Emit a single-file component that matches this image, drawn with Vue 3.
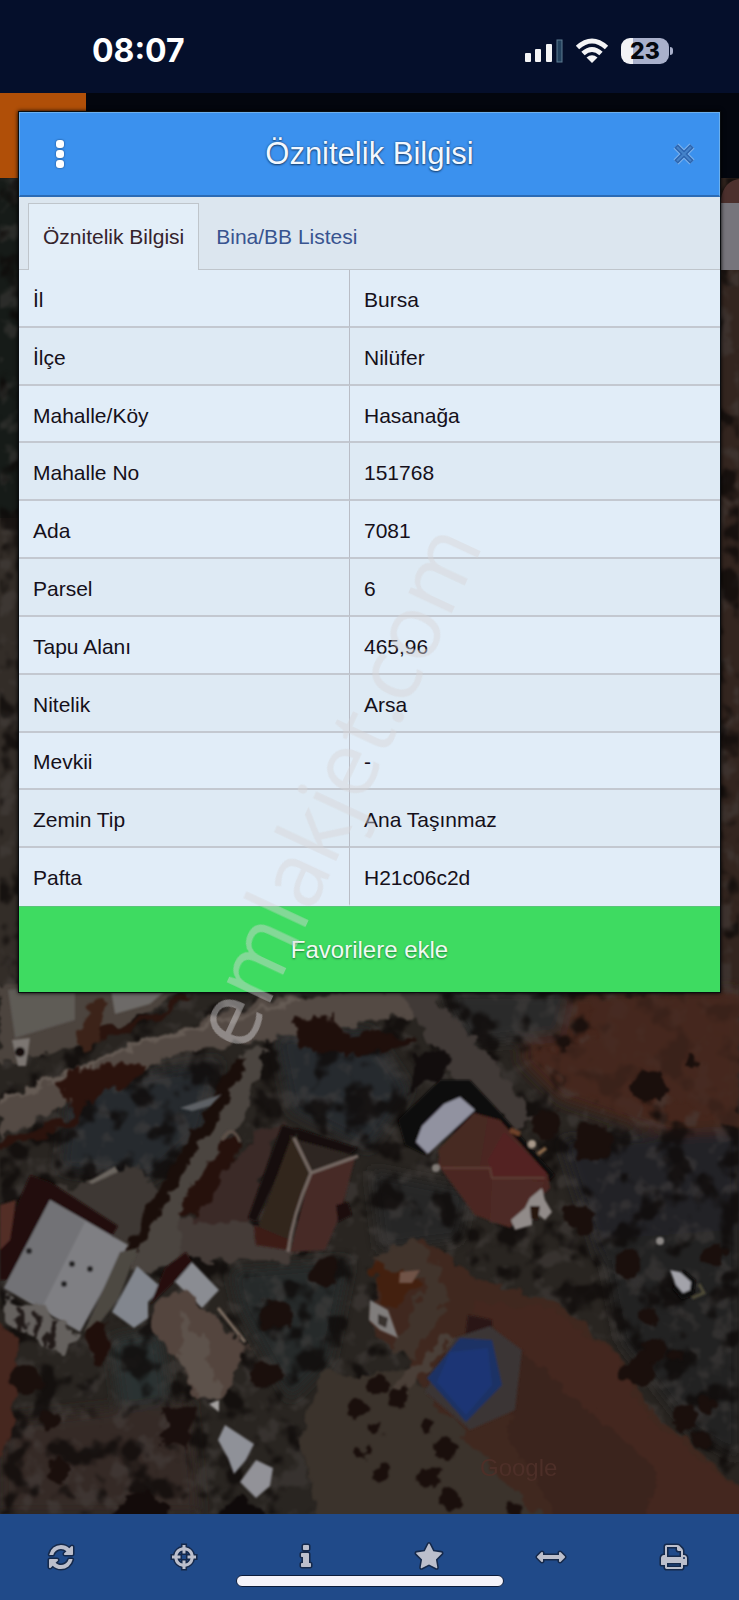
<template>
  <div class="screen">
    <header class="status-bar">
      <span class="clock">08:07</span>
      <div class="status-icons">
        <svg class="signal" viewBox="0 0 38 24" aria-hidden="true">
          <rect x="0" y="14" width="6" height="9" rx="1" fill="#f4f4f6" />
          <rect x="10" y="10" width="6" height="13" rx="1" fill="#f4f4f6" />
          <rect x="21" y="5" width="6" height="18" rx="1" fill="#f4f4f6" />
          <rect x="32" y="1" width="5" height="22" fill="#22405c" stroke="#5f7c92" stroke-width="1" />
        </svg>
        <svg class="wifi" viewBox="0 0 34 26" aria-hidden="true">
          <path d="M2.5 9.5Q17-3.500 31.500 9.500" fill="none" stroke="#f4f4f6" stroke-width="5" />
          <path d="M8 15.500Q17 7.500 26 15.500" fill="none" stroke="#f4f4f6" stroke-width="5" />
          <path d="M11.500 19.500Q17 15 22.500 19.500L17 25z" fill="#f4f4f6" />
        </svg>
        <div class="battery">
          <span>23</span>
        </div>
      </div>
    </header>

    <div class="site-header">
      <div class="logo-block"></div>
    </div>

    <main class="map">
      <svg viewBox="0 178 739 1336" preserveAspectRatio="xMidYMax slice" aria-hidden="true">
        <defs>
          <filter id="trees" x="0" y="0" width="100%" height="100%" color-interpolation-filters="sRGB">
            <feTurbulence type="fractalNoise" baseFrequency="0.032" numOctaves="3" seed="8" />
            <feColorMatrix values="0 0 0 0 0.05  0 0 0 0 0.035  0 0 0 0 0.03  7 0 0 0 -3.7" />
            <feGaussianBlur stdDeviation="1" />
          </filter>
          <filter id="grain" x="0" y="0" width="100%" height="100%" color-interpolation-filters="sRGB">
            <feTurbulence type="fractalNoise" baseFrequency="0.045" numOctaves="3" seed="21" />
            <feColorMatrix values="0 0 0 0 0.3  0 0 0 0 0.28  0 0 0 0 0.27  0 6 0 0 -3.1" />
            <feGaussianBlur stdDeviation="1" />
          </filter>
          <filter id="rough" x="-5%" y="-5%" width="110%" height="110%" color-interpolation-filters="sRGB">
            <feTurbulence type="fractalNoise" baseFrequency="0.06" numOctaves="3" seed="4" result="n" />
            <feDisplacementMap in="SourceGraphic" in2="n" scale="20" xChannelSelector="R" yChannelSelector="G" />
            <feGaussianBlur stdDeviation="1" />
          </filter>
          <filter id="soft"><feGaussianBlur stdDeviation="1" /></filter>
          <filter id="haze"><feGaussianBlur stdDeviation="7" /></filter>
        </defs>

        <rect y="178" width="739" height="1336" fill="#292521" />

        <!-- edges beside the dialog -->
        <rect x="0" y="178" width="24" height="340" fill="#161b18" />
        <rect x="0" y="518" width="24" height="480" fill="#332d28" />
        <rect x="716" y="178" width="23" height="820" fill="#33251f" />

        <!-- ground areas -->
        <g filter="url(#haze)">
          <path d="M540 990H739V1140L650 1130L560 1100L520 1060Z" fill="#44281f" />
          <path d="M440 990H570L560 1035L470 1045Z" fill="#2a2b2c" />
          <path d="M70 1085L220 1060L205 1130L150 1180L60 1170Z" fill="#272a2d" />
          <path d="M275 1035L370 1030L410 1090L370 1150L290 1110Z" fill="#272b2d" />
          <path d="M230 1270L350 1260L330 1360L290 1400L240 1310Z" fill="#272a2b" />
          <path d="M110 1340L160 1330L170 1400L120 1410Z" fill="#2c3033" />
          <path d="M560 1140L739 1130V1250L600 1260Z" fill="#232425" />
          <path d="M370 1170L470 1190L460 1240L380 1250Z" fill="#262727" />
          <path d="M0 1420L190 1400L200 1514H0Z" fill="#352c27" />
          <path d="M600 1240L739 1230V1460L690 1430L620 1340Z" fill="#242323" />
        </g>

        <rect y="178" width="739" height="1336" filter="url(#grain)" opacity=".4" />
        <rect y="178" width="739" height="1336" filter="url(#trees)" opacity=".75" />

        <g filter="url(#rough)">
          <!-- red soil top right -->
          <path d="M590 1000L739 990V1130L700 1110L650 1085L640 1120L560 1080L540 1055L600 1040Z" fill="#46281f" opacity=".75" />

          <!-- roads -->
          <path d="M0 985L190 985L130 1020L60 1050L0 1065Z" fill="#4c443e" />
          <path d="M0 1098L120 1050L260 1000L420 985L440 1010L300 1035L200 1050L120 1075L0 1140Z" fill="#544a44" />
          <path d="M0 1100L150 1040L300 1000" fill="none" stroke="#655b54" stroke-width="4" />
          <path d="M60 1078L75 1068L145 1064L135 1078L85 1102L75 1125L0 1150V1142L72 1118Z" fill="#2b130d" />
          <path d="M400 995L430 990L500 1070L535 1120L515 1132L450 1070Z" fill="#413a37" />
          <path d="M244 1050L268 1048L244 1115L180 1215L184 1260L140 1275L125 1262L165 1200L215 1112Z" fill="#4b4540" />
          <path d="M90 1180L140 1165L160 1200L125 1255L80 1215L55 1190Z" fill="#3e3834" />
          <path d="M180 1220L250 1225L300 1250L290 1262L180 1262Z" fill="#453c38" />
          <path d="M234 1062L244 1062L236 1085L168 1200L130 1262L116 1285L112 1278L155 1195L200 1120Z" fill="#1a0e0a" />
          <path d="M222 1145L243 1135L232 1165L200 1218L175 1214L195 1180Z" fill="#26110c" />
          <path d="M232 1165L258 1130L282 1120L250 1225L195 1222Z" fill="#3b2a27" />
          <path d="M293 1018L335 1016L345 1035L369 1030L420 1040L370 1055L300 1050Z" fill="#1f0f0b" />
          <path d="M415 1055L445 1050L450 1075L410 1090Z" fill="#120d0d" />
        </g>

        <!-- roofs on the left -->
        <g filter="url(#soft)">
          <path d="M8 990L75 980V1020L15 1038Z" fill="#5f5b57" />
          <path d="M110 985H172L150 1004L115 1014Z" fill="#6d6a68" />
          <path d="M12 1040L30 1038L26 1066H18Z" fill="#7b7672" />
          <circle cx="20" cy="1052" r="5" fill="#151110" />
          <path d="M30 1175L50 1182L118 1226L112 1236L50 1200L8 1280H0V1245Z" fill="#220d09" />
          <path d="M0 1205L16 1200L10 1240L0 1250Z" fill="#532e26" />
          <path d="M50 1200L128 1245L80 1332L4 1288Z" fill="#7f7f83" />
          <path d="M50 1200L85 1222L42 1308L4 1288Z" fill="#727276" />
          <path d="M192 1262L219 1290L202 1308L175 1282Z" fill="#8a8c92" />
          <path d="M137 1266L162 1288L148 1302V1318L134 1328L112 1312Z" fill="#82868e" />
          <path d="M120 1252L138 1248L118 1300L98 1325L84 1332Z" fill="#4d4a43" />
          <path d="M165 1268L186 1252L192 1262L176 1280L150 1305Z" fill="#260f0b" />
          <path d="M218 1308L245 1342" stroke="#7d6e62" stroke-width="3" />
          <path d="M209 1404L219 1400V1412Z" fill="#a4a1a0" />
          <path d="M225 1425L254 1444L246 1460L234 1474L228 1458L218 1440Z" fill="#8f9198" />
          <path d="M256 1460L273 1468L270 1486L256 1498L240 1482Z" fill="#929298" />
          <g fill="#242022">
            <circle cx="29" cy="1251" r="3" />
            <circle cx="72" cy="1264" r="3" />
            <circle cx="90" cy="1269" r="3" />
            <circle cx="64" cy="1284" r="3" />
          </g>
        </g>

        <g filter="url(#rough)">
          <path d="M78 1030L100 995L108 1000L98 1050L85 1058Z" fill="#3c2319" />
          <path d="M100 1030L165 1010L180 992L192 994L160 1020L100 1042Z" fill="#2a140e" />
          <path d="M2 1300L42 1308L84 1338L60 1355L10 1325Z" fill="#65615e" />
          <path d="M20 1306V1332M36 1312V1340M54 1320L50 1348" stroke="#211a18" stroke-width="5" />
          <path d="M-10 1310L20 1345L10 1440L-10 1470Z" fill="#46271f" />
          <path d="M152 1304L175 1288L215 1315L250 1350L235 1378L222 1400L195 1398L182 1362L160 1340Z" fill="#54453e" />
          <path d="M182 1310L205 1345L222 1400L200 1398L180 1360Z" fill="#5d524b" />
          <path d="M108 1520L130 1490L150 1488L172 1520Z" fill="#130b0a" />
          <path d="M215 1520L240 1494L270 1520Z" fill="#0f0a0a" />
          <path d="M165 1410L195 1405L190 1450L165 1445Z" fill="#1a0f0d" />
          <path d="M88 1330L110 1320L105 1365L92 1368Z" fill="#200f0b" />
        </g>

        <g filter="url(#soft)">
          <!-- hipped roof in the middle -->
          <path d="M282 1125L298 1130L256 1222L248 1218Z" fill="#190e0b" />
          <path d="M292 1135L310 1175L288 1245L254 1238Z" fill="#33251f" />
          <path d="M290 1135L358 1158L310 1174Z" fill="#2f2622" />
          <path d="M310 1174L355 1158L340 1215L325 1250L290 1252Z" fill="#472a25" />
          <path d="M254 1225L290 1240L288 1250L256 1245Z" fill="#3d1d19" />
          <path d="M294 1138L311 1173L358 1156M311 1173Q293 1215 288 1252" fill="none" stroke="#776b65" stroke-width="3" />
          <path d="M296 1128L358 1148L350 1154L298 1140Z" fill="#120a09" />
          <path d="M336 1205L348 1202L352 1215L338 1222Z" fill="#1c0d0b" />
          <path d="M180 1108L222 1094L210 1106L192 1111Z" fill="#5d6165" />
          <path d="M88 1182L115 1166L118 1172L92 1184Z" fill="#6b655f" />
          <path d="M222 1140Q232 1122 240 1142" fill="none" stroke="#5f5149" stroke-width="3" />

          <!-- red roofs on the right -->
          <path d="M398 1120L440 1080L470 1080L498 1110L555 1175L545 1185L475 1115L425 1155L405 1145Z" fill="#0f0a09" />
          <path d="M474 1113L500 1120L548 1175L550 1188L510 1228L475 1215L438 1165L440 1148Z" fill="#4c2620" />
          <path d="M474 1113L488 1118L480 1168L440 1165L438 1150Z" fill="#472921" />
          <path d="M504 1132L546 1172L545 1180L492 1176L488 1160Z" fill="#532422" />
          <path d="M492 1178L545 1182L510 1225L490 1222Z" fill="#4e2c26" />
          <path d="M442 1168L490 1168L492 1178H545" fill="none" stroke="#5d3d36" stroke-width="2" />
          <path d="M460 1097L475 1110L428 1154L416 1142L422 1126L444 1104Z" fill="#9192a0" />
          <path d="M511 1220L525 1208L530 1198L542 1188L545 1200L552 1212L545 1220L532 1210V1225L515 1230Z" fill="#918b89" />
          <path d="M530 1206L540 1206L538 1220L531 1219Z" fill="#251310" />
          <path d="M510 1130L520 1134" fill="none" stroke="#70432c" stroke-width="5" />
          <circle cx="532" cy="1144" r="4" fill="#a99a8b" />
          <path d="M538 1154L546 1148" stroke="#86664a" stroke-width="4" />
          <circle cx="436" cy="1168" r="4" fill="#817b77" />
          <circle cx="660" cy="1241" r="4" fill="#8c8886" />
        </g>

        <!-- field with the selected parcel -->
        <g filter="url(#rough)">
          <path d="M320 1374L400 1370L440 1400L560 1524H320L300 1440Z" fill="#3b332c" />
          <path d="M375 1260L425 1240L470 1275L560 1305L625 1360L650 1410L750 1495V1524H545L470 1440L425 1390L400 1350L372 1330Z" fill="#40281f" />
          <path d="M470 1300L550 1310L620 1360L640 1410L750 1500V1524H620L540 1400Z" fill="#44271f" />
          <path d="M520 1350L660 1470L640 1524H560L510 1440Z" fill="#3b241d" />
          <path d="M372 1270L385 1262L420 1262L418 1285L398 1305H380Z" fill="#43200f" />
          <path d="M370 1260Q400 1236 425 1246L450 1300L410 1360L395 1350L425 1280Z" fill="#41342c" />
          <path d="M393 1385L450 1335L458 1340L405 1392Z" fill="#4a3f38" />
        </g>
        <g filter="url(#soft)">
          <path d="M370 1300L388 1310L398 1338L380 1330L369 1320Z" fill="#807d7c" />
          <path d="M378 1314L388 1318L386 1328L378 1324Z" fill="#38302e" />
          <path d="M400 1272L420 1270L412 1283L399 1283Z" fill="#6f5246" />
          <path d="M468 1315L492 1320V1340L465 1338Z" fill="#2a1719" />
          <path d="M455 1338L490 1326L522 1350L515 1410L470 1430L425 1392Z" fill="#3b3435" />
          <path d="M460 1338L492 1340L502 1385L466 1422L427 1378Z" fill="#1e3365" />
          <path d="M450 1352L488 1348L492 1385L466 1415L437 1382Z" fill="#1c3674" />
          <path d="M674 1278L684 1270L696 1280L694 1296L682 1300L673 1290Z" fill="#090808" />
          <path d="M670 1270L680 1272L691 1282L690 1290L683 1293L676 1285Z" fill="#a3a3aa" />
          <path d="M699 1284L704 1293L692 1298" fill="none" stroke="#4f4b39" stroke-width="3" />
        </g>
        <g filter="url(#rough)" fill="#1a0f0c">
          <circle v-for="(t, i) in shrubs" :key="i" :cx="t[0]" :cy="t[1]" :r="t[2]" />
        </g>
        <text class="map-credit" x="480" y="1476">Google</text>

        <path d="M720 205Q722 181 739 179V205Z" fill="#4c302d" />
        <rect x="720" y="203" width="19" height="67" fill="#77757c" />
      </svg>
    </main>

    <nav class="toolbar">
      <button v-for="tool in tools" :key="tool.label" type="button" :aria-label="tool.label">
        <svg viewBox="0 0 1792 1792" aria-hidden="true"><path :d="tool.path" fill-rule="evenodd" /></svg>
      </button>
      <div class="home-indicator"></div>
    </nav>

    <section class="dialog" role="dialog" aria-labelledby="dialog-title">
      <div class="dialog-header">
        <button type="button" class="menu-btn" aria-label="Menü">
          <i></i><i></i><i></i>
        </button>
        <h1 id="dialog-title">Öznitelik Bilgisi</h1>
        <button type="button" class="close-btn" aria-label="Kapat">
          <svg viewBox="0 0 22 22" aria-hidden="true">
            <path d="M3 3L19 19M19 3L3 19" stroke="#7fb4ee" stroke-width="7" />
            <path d="M3 3L19 19M19 3L3 19" stroke="#2c65b0" stroke-width="5" />
            <path d="M4 4L18 18M18 4L4 18" stroke="#4583c9" stroke-width="2" />
          </svg>
        </button>
      </div>

      <div class="tabs" role="tablist">
        <button
          v-for="tab in tabs"
          :key="tab"
          type="button"
          role="tab"
          :class="{ active: tab === activeTab }"
          :aria-selected="tab === activeTab"
          @click="activeTab = tab"
        >{{ tab }}</button>
      </div>

      <table class="attributes">
        <tbody>
          <tr v-for="row in rows" :key="row.label">
            <th scope="row">{{ row.label }}</th>
            <td>{{ row.value }}</td>
          </tr>
        </tbody>
      </table>

      <button type="button" class="favorite-btn">Favorilere ekle</button>
    </section>

    <div class="watermark">emlakjet.com</div>
  </div>
</template>

<script setup>
import { ref } from 'vue'

const tabs = ['Öznitelik Bilgisi', 'Bina/BB Listesi']
const activeTab = ref('Öznitelik Bilgisi')

const rows = [
  { label: 'İl', value: 'Bursa' },
  { label: 'İlçe', value: 'Nilüfer' },
  { label: 'Mahalle/Köy', value: 'Hasanağa' },
  { label: 'Mahalle No', value: '151768' },
  { label: 'Ada', value: '7081' },
  { label: 'Parsel', value: '6' },
  { label: 'Tapu Alanı', value: '465,96' },
  { label: 'Nitelik', value: 'Arsa' },
  { label: 'Mevkii', value: '-' },
  { label: 'Zemin Tip', value: 'Ana Taşınmaz' },
  { label: 'Pafta', value: 'H21c06c2d' }
]

const tools = [
  {
    label: 'Yenile',
    path: 'M1639 1056q0 5-1 7-64 268-268 434.500t-478 166.500q-146 0-282.500-55t-243.500-157l-129 129q-19 19-45 19t-45-19-19-45v-448q0-26 19-45t45-19h448q26 0 45 19t19 45-19 45l-137 137q71 66 161 102t187 36q134 0 250-65t186-179q11-17 53-117 8-23 30-23h192q13 0 22.500 9.500t9.500 22.500zm25-800v448q0 26-19 45t-45 19h-448q-26 0-45-19t-19-45 19-45l138-138q-148-137-349-137-134 0-250 65t-186 179q-11 17-53 117-8 23-30 23h-199q-13 0-22.500-9.500t-9.500-22.500v-7q65-268 270-434.500t480-166.500q146 0 284 55.500t245 156.500l130-129q19-19 45-19t45 19 19 45z'
  },
  {
    label: 'Konum',
    path: 'M800 128h192v150a626 626 0 0 1 522 522h150v192h-150a626 626 0 0 1-522 522v150h-192v-150a626 626 0 0 1-522-522h-150v-192h150a626 626 0 0 1 522-522zM800 475a430 430 0 0 0-325 325h197v192h-197a430 430 0 0 0 325 325v-197h192v197a430 430 0 0 0 325-325h-197v-192h197a430 430 0 0 0-325-325v197h-192z'
  },
  {
    label: 'Bilgi',
    path: 'M1216 1344v128q0 26-19 45t-45 19h-512q-26 0-45-19t-19-45v-128q0-26 19-45t45-19h64v-384h-64q-26 0-45-19t-19-45v-128q0-26 19-45t45-19h384q26 0 45 19t19 45v576h64q26 0 45 19t19 45zm-128-1152v192q0 26-19 45t-45 19h-256q-26 0-45-19t-19-45v-192q0-26 19-45t45-19h256q26 0 45 19t19 45z'
  },
  {
    label: 'Favoriler',
    path: 'M1728 647q0 22-26 48l-363 354 86 500q1 7 1 20 0 21-10.500 35.500t-30.500 14.500q-19 0-40-12l-449-236-449 236q-22 12-40 12-21 0-31.500-14.500t-10.500-35.500q0-6 2-20l86-500-364-354q-25-27-25-48 0-37 56-46l502-73 225-455q19-41 49-41t49 41l225 455 502 73q56 9 56 46z'
  },
  {
    label: 'Ölç',
    path: 'M1792 896q0 26-19 45l-256 256q-19 19-45 19t-45-19-19-45v-128h-1024v128q0 26-19 45t-45 19-45-19l-256-256q-19-19-19-45t19-45l256-256q19-19 45-19t45 19 19 45v128h1024v-128q0-26 19-45t45-19 45 19l256 256q19 19 19 45z'
  },
  {
    label: 'Yazdır',
    path: 'M448 1536h896v-256h-896v256zm0-640h896v-384h-160q-40 0-68-28t-28-68v-160h-640v640zm1152 64q0-26-19-45t-45-19-45 19-19 45 19 45 45 19 45-19 19-45zm128 0v416q0 13-9.500 22.500t-22.500 9.500h-224v160q0 40-28 68t-68 28h-960q-40 0-68-28t-28-68v-160h-224q-13 0-22.500-9.500t-9.500-22.500v-416q0-79 56.500-135.500t135.500-56.500h64v-544q0-40 28-68t68-28h672q40 0 88 20t76 48l152 152q28 28 48 76t20 88v256h64q79 0 135.500 56.500t56.500 135.500z'
  }
]

// cx, cy, r
const shrubs = [
  [379, 1384, 10], [397, 1397, 9], [376, 1429, 7], [426, 1427, 7],
  [445, 1451, 11], [382, 1471, 9], [428, 1478, 10], [449, 1499, 11],
  [356, 1409, 9], [361, 1454, 6], [515, 1510, 7], [676, 1356, 7],
  [649, 1318, 10], [640, 1370, 16], [655, 1350, 12], [706, 1404, 10],
  [686, 1420, 12], [700, 1440, 8], [715, 1255, 11], [628, 1262, 14],
  [272, 1315, 16], [265, 1374, 14], [325, 1272, 14],
  [25, 1380, 16], [50, 1420, 10], [60, 1470, 12], [648, 1085, 16],
  [545, 1125, 14], [590, 1140, 18], [580, 1220, 16], [692, 1065, 7]
]
</script>

<style>
body {
  background: #26231f;
}
</style>

<style scoped>
.screen {
  position: relative;
  display: flex;
  flex-direction: column;
  min-height: 100vh;
  overflow: hidden;
  font-family: "Liberation Sans", Arial, sans-serif;
}
button {
  margin: 0;
  padding: 0;
  border: 0;
  background: none;
  font-family: inherit;
  cursor: pointer;
}

/* status bar */
.status-bar {
  display: flex;
  align-items: center;
  justify-content: space-between;
  box-sizing: border-box;
  height: 93px;
  padding: 8px 65px 0 92px;
  background: #050f2b;
}
.clock {
  color: #fff;
  font-family: Inter, sans-serif;
  font-size: 32px;
  font-weight: 700;
}
.status-icons {
  display: flex;
  align-items: center;
  gap: 12px;
}
.signal {
  width: 38px;
  height: 24px;
}
.wifi {
  width: 34px;
  height: 26px;
}
.battery {
  position: relative;
  width: 48px;
  height: 26px;
  margin-right: 5px;
  border-radius: 9px;
  background: linear-gradient(90deg, #f2f2f6 25%, #a9b0cb 25%);
  color: #05080f;
  font-family: Inter, sans-serif;
  font-size: 23px;
  font-weight: 800;
  line-height: 26px;
  text-align: center;
}
.battery::after {
  content: "";
  position: absolute;
  top: 9px;
  right: -4px;
  width: 3px;
  height: 8px;
  border-radius: 0 3px 3px 0;
  background: #a9b0cb;
}

/* page behind the dialog */
.site-header {
  height: 85px;
  background: #03060e;
}
.logo-block {
  width: 86px;
  height: 100%;
  background: #b04f08;
}
.map {
  position: relative;
  flex: 1;
  min-height: 900px;
}
.map svg {
  position: absolute;
  width: 100%;
  height: 100%;
}
.map-credit {
  fill: #4d2f28;
  font-size: 24px;
}

/* bottom toolbar */
.toolbar {
  position: relative;
  display: grid;
  grid-template-columns: repeat(6, 1fr);
  height: 86px;
  padding-right: 4px;
  background: #204a89;
}
.toolbar button {
  display: flex;
  align-items: center;
  justify-content: center;
}
.toolbar svg {
  width: 28px;
  height: 28px;
  overflow: visible;
}
.toolbar path {
  fill: #bcbfcc;
  stroke: #15294b;
  stroke-width: 200;
  paint-order: stroke;
}
.home-indicator {
  position: absolute;
  bottom: 13px;
  left: 50%;
  width: 36%;
  height: 10px;
  border: 1px solid #0b1c3c;
  border-radius: 6px;
  background: #f4f3fa;
  transform: translateX(-50%);
}

/* dialog */
.dialog {
  position: absolute;
  top: 112px;
  left: 19px;
  right: 19px;
  display: flex;
  flex-direction: column;
  background: #e3eef8;
  box-shadow: 0 0 0 1px #0a0d10, 0 0 4px 1px #000;
}
.dialog-header {
  display: grid;
  grid-template-columns: 1fr auto 1fr;
  align-items: center;
  box-sizing: border-box;
  height: 85px;
  padding: 0 24px;
  border: 1px solid #6cb0ee;
  border-bottom: 2px solid #2b6bb5;
  background: #3b91ee;
}
.dialog-header h1 {
  margin: 0;
  color: #f2f8ff;
  font-size: 31px;
  font-weight: 400;
  line-height: 40px;
  text-shadow: 0 1px 2px #173f70, 0 0 2px #245489;
}
.menu-btn {
  display: flex;
  flex-direction: column;
  align-items: center;
  gap: 2px;
  width: 32px;
}
.menu-btn i {
  width: 8px;
  height: 8px;
  border-radius: 3px;
  background: #fff;
  box-shadow: 0 0 2px #12396b;
}
.close-btn {
  justify-self: end;
  width: 22px;
  height: 22px;
}
.close-btn svg {
  display: block;
}

.tabs {
  display: flex;
  align-items: flex-end;
  box-sizing: border-box;
  height: 73px;
  padding: 0 9px;
  border-bottom: 1px solid #bfc5cb;
  background: #dce6ef;
}
.tabs button {
  box-sizing: border-box;
  height: 67px;
  margin-bottom: -1px;
  padding: 0 14px;
  border: 1px solid transparent;
  border-bottom: 0;
  color: #38548f;
  font-size: 21px;
  line-height: 66px;
}
.tabs button + button {
  padding-left: 16px;
}
.tabs .active {
  border-color: #bfc5cb;
  background: #e3eef8;
  color: #35232b;
}

.attributes {
  width: 100%;
  height: 636px;
  border-spacing: 0;
  border-collapse: separate;
  table-layout: fixed;
  color: #15101a;
  font-size: 21px;
}
.attributes th,
.attributes td {
  padding: 4px 14px 0;
  border-bottom: 2px solid #c3c8d0;
  font-weight: 400;
  text-align: left;
}
.attributes th {
  width: 302px;
  border-right: 1px solid #b9bdc6;
}
.attributes tr:nth-child(odd) {
  background: #e1edf8;
}
.attributes tr:nth-child(even) {
  background: #deeaf4;
}
.attributes tr:last-child th,
.attributes tr:last-child td {
  border-bottom-color: transparent;
}

.favorite-btn {
  height: 86px;
  border-top: 1px solid #58c478;
  background: #3edb61;
  color: #f1faf2;
  font-size: 24px;
  text-shadow: 0 1px 2px #1c7a38;
}

/* diagonal mark over the whole page */
.watermark {
  position: absolute;
  top: 785px;
  left: 45%;
  color: rgba(214, 212, 216, 0.45);
  font-family: "Open Sans", sans-serif;
  font-size: 90px;
  line-height: 1;
  white-space: nowrap;
  pointer-events: none;
  transform: translate(-50%, -50%) rotate(-65deg);
}
</style>
